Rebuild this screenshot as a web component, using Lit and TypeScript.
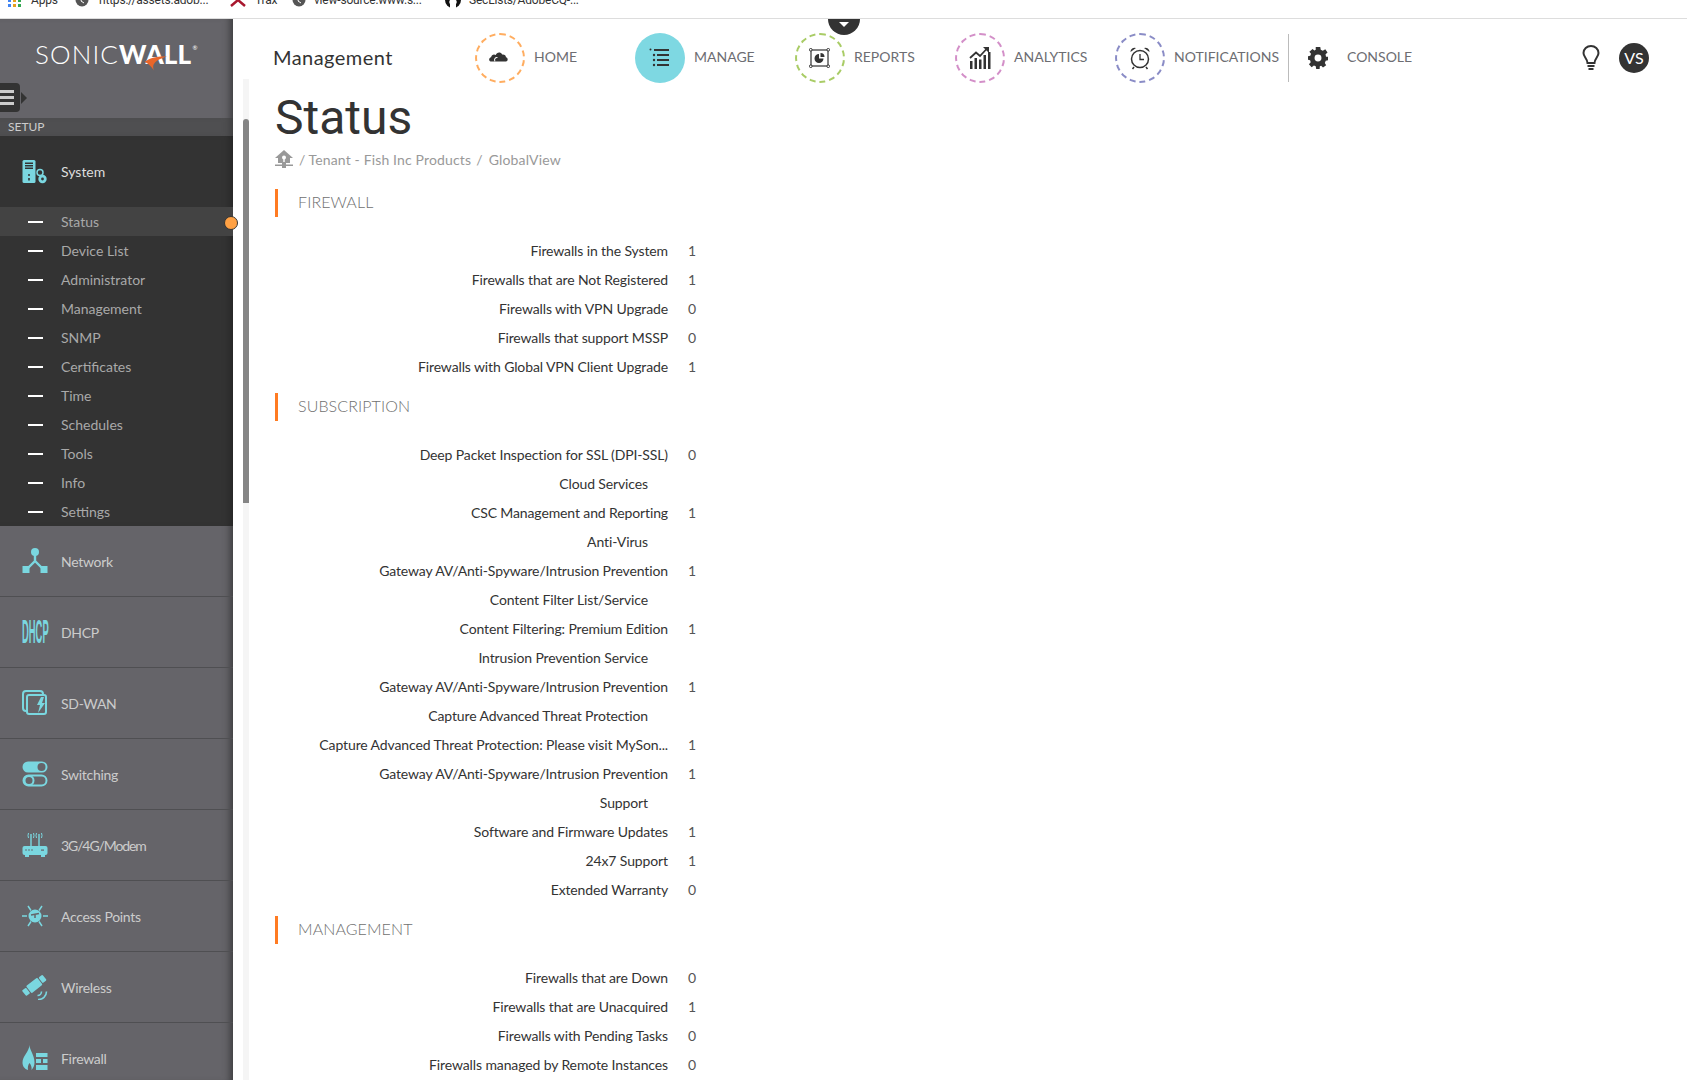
import { LitElement, html, css, svg } from "lit";
import { customElement } from "lit/decorators.js";

const ic = (body: unknown, w = 26, h = 26, vb = "0 0 26 26") =>
  html`<svg width=${w} height=${h} viewBox=${vb}>${body}</svg>`;

const sideIcons: Record<string, unknown> = {
  system: ic(svg`<rect x="0.5" y="1" width="13" height="23" rx="1.5" fill="#7ad7e0"/><rect x="3" y="3.5" width="8" height="1.5" fill="#333"/><rect x="3" y="6" width="8" height="1.5" fill="#333"/><rect x="3" y="8.5" width="8" height="1.5" fill="#333"/><circle cx="7" cy="16" r="1" fill="#333"/><rect x="6.2" y="19" width="1.6" height="2.5" fill="#333"/><circle cx="18" cy="13.5" r="3" fill="none" stroke="#7ad7e0" stroke-width="1.5"/><circle cx="20.5" cy="20" r="4.2" fill="#7ad7e0"/><circle cx="20.5" cy="20" r="1.4" fill="#333"/>`),
  network: ic(svg`<circle cx="13" cy="4" r="4" fill="#7ad7e0"/><path d="M13 6 V13 L5 21 M13 13 L21 21" fill="none" stroke="#7ad7e0" stroke-width="2.4"/><rect x="0.5" y="18" width="7" height="7" fill="#7ad7e0"/><rect x="18.5" y="18" width="7" height="7" fill="#7ad7e0"/>`),
  sdwan: ic(svg`<rect x="1" y="1" width="20" height="20" rx="3" fill="none" stroke="#7ad7e0" stroke-width="2"/><rect x="5" y="5" width="19" height="19" rx="2" fill="#656469" stroke="#7ad7e0" stroke-width="2"/><path d="M19 7 L15 15 H18 L16 23 L23 13 H20 L22 7 Z" fill="#7ad7e0"/>`),
  switching: ic(svg`<rect x="0.5" y="0.5" width="25" height="11" rx="5.5" fill="#7ad7e0"/><circle cx="19.5" cy="6" r="4" fill="#656469"/><rect x="1.5" y="14.5" width="23" height="10" rx="5" fill="none" stroke="#7ad7e0" stroke-width="2"/><circle cx="7" cy="19.5" r="4.5" fill="none" stroke="#7ad7e0" stroke-width="2"/>`),
  modem: ic(svg`<path d="M9 2 V15 M17 2 V15" stroke="#7ad7e0" stroke-width="1.4"/><path d="M6.5 1 Q5.5 3.5 6.5 6 M11.500 1 Q12.500 3.500 11.500 6 M14.500 1 Q13.500 3.500 14.500 6 M19.500 1 Q20.500 3.500 19.500 6" fill="none" stroke="#7ad7e0"/><path d="M2.500 14 H23.500 Q25.500 14 25.500 16 V21 Q25.500 23 23.500 23 H2.500 Q0.500 23 0.500 21 V16 Q0.500 14 2.500 14 Z" fill="#7ad7e0"/><rect x="3" y="23" width="4" height="2" fill="#7ad7e0"/><rect x="19" y="23" width="4" height="2" fill="#7ad7e0"/><circle cx="4" cy="18" r="0.8" fill="#656469"/><circle cx="7" cy="18" r="0.8" fill="#656469"/><circle cx="10" cy="18" r="0.8" fill="#656469"/><rect x="19" y="17.500" width="3" height="1.200" fill="#656469"/>`),
  ap: ic(svg`<circle cx="13" cy="13" r="6.5" fill="#7ad7e0"/><path d="M9 12 L17 10.500" fill="none" stroke="#656469" stroke-width="1.500"/><path d="M13 12 V15" fill="none" stroke="#656469" stroke-width="1.500"/><path d="M0 13 H5 M21 13 H26 M6 3 L9 7.500 M20 3 L17 7.500 M6 23 L9 18.500 M20 23 L17 18.500" stroke="#7ad7e0" stroke-width="1.500"/>`),
  wireless: ic(svg`<g fill="#7ad7e0" transform="rotate(-38 12 11)"><rect x="5" y="7" width="14" height="9" rx="1"/><rect x="-1" y="8" width="5" height="7" rx="1"/><rect x="20" y="8" width="5" height="7" rx="1"/></g><path d="M15.500 21.500 A4 4 0 0 0 19.500 17.500 M16 25.500 A8 8 0 0 0 24.500 17.500" fill="none" stroke="#7ad7e0" stroke-width="1.600"/>`),
  firewall: ic(svg`<path d="M7.500 0 C7.500 5 12.500 10 12.500 17.500 C12.500 20 11.500 23 9.500 25 C10 22 9 20 7.500 18 C6 20 5.500 22 6 25 C2.500 24 0.500 21 0.500 17.500 C0.500 11 7 7 7.500 0 Z" fill="#7ad7e0"/><path d="M14 8 H25.500 V12 H14 Z M14 14 H19 V18 H14 Z M21 14 H25.500 V18 H21 Z M14 20 H25.500 V25 H14 Z" fill="#7ad7e0"/>`),
};

const navIcons = {
  cloud: ic(svg`<path d="M2 17 C-0.500 17 -0.500 12.500 2.500 12 C3 9 6 8 8 9.500 C9 6 14 5.500 15.500 9 C18 8.500 20 10 20 12 C22.500 12 23 17 20 17 Z" fill="#333"/><path d="M7 17 C5.500 14 8 12 10 12.500" fill="none" stroke="#fff" stroke-width="1.200"/>`, 22, 22),
  list: ic(svg`<circle cx="1.500" cy="1.500" r="1" fill="#333"/><rect x="5" y="1" width="15" height="2" fill="#333"/><circle cx="5" cy="7" r="1.200" fill="#333"/><rect x="8" y="6" width="12" height="2" fill="#333"/><circle cx="5" cy="12" r="1.200" fill="#333"/><rect x="8" y="11" width="12" height="2" fill="#333"/><circle cx="5" cy="17" r="1.200" fill="#333"/><rect x="8" y="16" width="12" height="2" fill="#333"/>`, 22, 20, "0 0 22 20"),
  report: ic(svg`<rect x="2" y="2" width="17" height="16" fill="none" stroke="#333" stroke-width="1.200"/><g fill="#fff" stroke="#333"><rect x="0.500" y="0.500" width="2.500" height="2.500" rx="1"/><rect x="18" y="0.500" width="2.500" height="2.500" rx="1"/><rect x="0.500" y="17" width="2.500" height="2.500" rx="1"/><rect x="18" y="17" width="2.500" height="2.500" rx="1"/></g><path d="M10 6 A4.500 4.500 0 1 0 14.500 10.500 H10 Z" fill="#333"/><path d="M11.500 5 A4 4 0 0 1 15.500 9 H11.500 Z" fill="#333"/>`, 22, 20, "0 0 22 20"),
  chart: ic(svg`<rect x="1" y="15" width="2.500" height="8" fill="#333"/><rect x="5.500" y="12" width="2.500" height="11" fill="#333"/><rect x="10" y="13.500" width="2.500" height="9.500" fill="#333"/><rect x="14.500" y="9" width="2.500" height="14" fill="#333"/><rect x="19" y="6" width="2.500" height="17" fill="#333"/><path d="M1 12 L7 6.500 L11 10 L18 2.500" fill="none" stroke="#333" stroke-width="1.800"/><path d="M14 1 H20 V7 Z" fill="#333"/>`, 22, 24, "0 0 22 24"),
  clock: ic(svg`<circle cx="11" cy="13" r="8.500" fill="none" stroke="#333" stroke-width="1.500"/><path d="M11 8 V13.500 H15" fill="none" stroke="#333" stroke-width="1.300"/><path d="M1.500 6 A4 4 0 0 1 7 2 Z M20.500 6 A4 4 0 0 0 15 2 Z" fill="#333"/><path d="M5 21 L3.500 23 M17 21 L18.500 23" stroke="#333" stroke-width="1.500"/>`, 22, 24, "0 0 22 24"),
  gear: ic(svg`<path fill-rule="evenodd" fill="#333" d="M8.500 0 H13.500 L14 3 L16.300 4 L19 2.300 L21.500 6 L19.300 8 L19.800 10.500 H22 V14.500 L19.500 15 L18.500 17.500 L20 20 L16.500 22.500 L14.500 20.500 L13 21 L12.800 24 H9 L8.500 21 L6.500 20.300 L4 22.300 L1 19 L3 16.800 L2.300 14.500 L0 14 V10 L2.500 9.500 L3.300 7.300 L1.500 5 L5 2 L7 3.800 L8.500 3 Z M11 8.200 A3.800 3.800 0 1 0 11 15.800 A3.800 3.800 0 1 0 11 8.200 Z"/>`, 20, 22, "0 0 22 24"),
};

const sub = ["Status", "Device List", "Administrator", "Management", "SNMP", "Certificates", "Time", "Schedules", "Tools", "Info", "Settings"];
const groups: [string, string][] = [
  ["network", "Network"], ["dhcp", "DHCP"], ["sdwan", "SD-WAN"], ["switching", "Switching"],
  ["modem", "3G/4G/Modem"], ["ap", "Access Points"], ["wireless", "Wireless"], ["firewall", "Firewall"],
];

type Row = [string, string?];
const sections: [string, Row[]][] = [
  ["FIREWALL", [["Firewalls in the System", "1"], ["Firewalls that are Not Registered", "1"], ["Firewalls with VPN Upgrade", "0"], ["Firewalls that support MSSP", "0"], ["Firewalls with Global VPN Client Upgrade", "1"]]],
  ["SUBSCRIPTION", [["Deep Packet Inspection for SSL (DPI-SSL)", "0"], ["Cloud Services"], ["CSC Management and Reporting", "1"], ["Anti-Virus"], ["Gateway AV/Anti-Spyware/Intrusion Prevention", "1"], ["Content Filter List/Service"], ["Content Filtering: Premium Edition", "1"], ["Intrusion Prevention Service"], ["Gateway AV/Anti-Spyware/Intrusion Prevention", "1"], ["Capture Advanced Threat Protection"], ["Capture Advanced Threat Protection: Please visit MySon...", "1"], ["Gateway AV/Anti-Spyware/Intrusion Prevention", "1"], ["Support"], ["Software and Firmware Updates", "1"], ["24x7 Support", "1"], ["Extended Warranty", "0"]]],
  ["MANAGEMENT", [["Firewalls that are Down", "0"], ["Firewalls that are Unacquired", "1"], ["Firewalls with Pending Tasks", "0"], ["Firewalls managed by Remote Instances", "0"]]],
];

const nav = [
  ["HOME", "home", navIcons.cloud], ["MANAGE", "manage", navIcons.list], ["REPORTS", "reports", navIcons.report],
  ["ANALYTICS", "analytics", navIcons.chart], ["NOTIFICATIONS", "notif", navIcons.clock],
] as [string, string, unknown][];

const globe = html`<svg class="bm-ic" width="14" height="14" viewBox="0 0 14 14"><circle cx="7" cy="7" r="6.500" fill="#555"/><path d="M3 3 L7 5 L6 8 L9 10" stroke="#fff" fill="none"/></svg>`;

@customElement("app-root")
export class AppRoot extends LitElement {
  static styles = css`
    :host { display: block; width: 1687px; height: 1080px; overflow: hidden; background: #fff; font-family: "Lato", "Liberation Sans", sans-serif; color: #333; }
    .bookmarks { height: 18px; border-bottom: 1px solid #ddd; overflow: hidden; }
    .bm-row { display: flex; align-items: center; height: 16px; margin-top: -8px; font: 12px "Roboto", sans-serif; letter-spacing: -0.2px; color: #333; white-space: nowrap; }
    .bm-ic { flex: none; }
    .apps { margin-left: 8px; width: 13px; height: 13px; display: grid; grid-template-columns: repeat(3, 3px); gap: 2px; flex: none; }
    .apps i { background: #e8a020; } .apps i:nth-child(3n+1) { background: #4285f4; } .apps i:nth-child(3n) { background: #34a853; }
    .bm1 { margin-left: 10px; width: 44px; }
    .bm2 { margin-left: 10px; width: 131px; }
    .bm3 { margin-left: 9px; width: 37px; }
    .bm4 { margin-left: 8px; width: 131px; }
    .bm5 { margin-left: 8px; }
    .body { display: flex; height: 1061px; }
    .side { width: 233px; flex: none; background: #656469; position: relative; box-shadow: inset -8px 0 7px -5px #3d3d3f; z-index: 1; }
    .logo-wrap { height: 64px; box-sizing: border-box; display: flex; align-items: center; padding: 5px 0 0 35px; color: #fff; position: relative; font-size: 26px; letter-spacing: 1.1px; font-weight: 300; white-space: nowrap; }
    .logo-wrap b { font-weight: 900; letter-spacing: 0.2px; }
    .logo-wrap sup { font-size: 6px; font-weight: 400; margin: -12px 0 0 1px; letter-spacing: 0; }
    .swoosh { position: absolute; left: 144px; top: 37px; }
    .ham-row { height: 36px; margin-bottom: -1px; display: flex; align-items: flex-start; }
    .ham { width: 20px; height: 29px; background: #333; border-radius: 0 4px 4px 0; display: flex; flex-direction: column; justify-content: center; gap: 3px; }
    .ham i { display: block; width: 14px; height: 3px; background: #ccc; }
    .tri { width: 0; height: 0; margin: 9px 0 0 1px; border-left: 6px solid #333; border-top: 6px solid transparent; border-bottom: 6px solid transparent; }
    .setup { height: 18px; line-height: 18px; background: #4f4f51; color: #ccc; font-size: 12px; padding-left: 8px; box-shadow: inset -8px 0 7px -5px #3d3d3f; }
    .sys { background: #333; box-shadow: inset -8px 0 7px -5px #262626; }
    .ghead { height: 70px; display: flex; align-items: center; padding-left: 22px; gap: 13px; font-size: 14px; color: #ccc; letter-spacing: -0.3px; box-sizing: border-box; }
    .ghead.sel { height: 71px; color: #ddd; letter-spacing: 0; }
    .modem { letter-spacing: -1.1px; }
    .g { border-bottom: 1px solid #4f4f52; }
    .ghead svg { flex: none; width: 26px; }
    .dhcp-box { flex: none; width: 26px; overflow: visible; }
    .dhcp { display: block; font: 700 33px/26px "Liberation Sans", sans-serif; color: #7ad7e0; transform: scaleX(0.285); transform-origin: left; letter-spacing: 0; white-space: nowrap; }
    .sub { height: 29px; display: flex; align-items: center; padding-left: 28px; gap: 18px; font-size: 14px; color: #a9a9a9; }
    .sub.on { background: #434343; }
    .sub i { display: block; width: 15px; height: 2px; background: #fff; }
    .dot { position: absolute; left: 224px; top: 197px; width: 12px; height: 12px; border-radius: 50%; background: #ffa144; border: 1.500px solid #333; }
    .track { width: 6px; flex: none; margin: 60px 0 0 10px; background: #f5f5f5; }
    .thumb { height: 384px; margin-top: 40px; background: #858585; border-radius: 3px 3px 0 0; }
    .main { flex: 1; min-width: 0; }
    .top { height: 77px; display: flex; align-items: center; position: relative; }
    .brand { width: 226px; padding: 0 0 2px 24px; box-sizing: border-box; font-size: 20px; color: #333; flex: none; letter-spacing: 0.45px; }
    .nav { width: 160px; display: flex; align-items: center; gap: 9px; flex: none; font-size: 14px; color: #6d6d72; }
    .nav span, .console span { margin-bottom: 2px; }
    .nav.last { width: 173px; }
    .circ { width: 50px; height: 50px; border-radius: 50%; display: flex; align-items: center; justify-content: center; box-sizing: border-box; border: 2.500px dashed; flex: none; }
    .home { border-color: #ffad60; } .manage { border: none; background: #7ed8e2; } .reports { border-color: #a9cc66; } .analytics { border-color: #d38fc8; } .notif { border-color: #8a8cc6; }
    .divider { width: 1px; height: 48px; background: #bbb; flex: none; margin-right: 19px; }
    .console { display: flex; align-items: center; gap: 19px; font-size: 14px; color: #6d6d72; }
    .right { margin-left: auto; display: flex; align-items: center; gap: 19px; padding-right: 38px; }
    .vs { width: 30px; height: 30px; border-radius: 50%; background: #333; color: #fff; font-size: 16px; display: flex; align-items: center; justify-content: center; }
    .pull { position: absolute; left: 579px; top: 0; width: 32px; height: 16px; background: #333; border-radius: 0 0 16px 16px; display: flex; justify-content: center; padding-top: 3px; box-sizing: border-box; }
    .pull i { width: 0; height: 0; border-top: 5px solid #fff; border-left: 5px solid transparent; border-right: 5px solid transparent; }
    .content { padding-left: 26px; }
    h1 { margin: 0; font: 400 48px/44px "Roboto", sans-serif; color: #333; }
    .crumb { display: flex; align-items: center; gap: 5px; height: 20px; margin-top: 9px; font-size: 14px; color: #999; letter-spacing: 0.15px; }
    .crumb svg { margin-right: 1px; }
    .sl1 { margin-right: -2px; }
    .sl2 { margin-right: 1px; }
    .section { margin-top: 12px; }
    .crumb + .section { margin-top: 20px; }
    .sec-h { height: 28px; border-left: 3px solid #ff7b22; padding-left: 20px; font-size: 16px; font-weight: 300; line-height: 26px; color: #707070; letter-spacing: 0.1px; margin-bottom: 19px; }
    .row { height: 29px; display: flex; align-items: center; font-size: 14px; color: #333; }
    .lbl { width: 393px; text-align: right; box-sizing: border-box; white-space: nowrap; letter-spacing: -0.12px; }
    .lbl.h { padding-right: 20px; }
    .val { margin-left: 20px; color: #555; }
  `;

  render() {
    return html`
      <div class="bookmarks"><div class="bm-row">
        <span class="apps">${Array.from({ length: 9 }, () => html`<i></i>`)}</span>
        <span class="bm1">Apps</span>${globe}<span class="bm2">https://assets.adob...</span>
        <svg class="bm-ic" width="16" height="14" viewBox="0 0 16 14"><path d="M1 1 L15 13 M15 1 L1 13" stroke="#a8172e" stroke-width="2.500"/></svg>
        <span class="bm3">Trax</span>${globe}<span class="bm4">view-source:www.s...</span>
        <svg class="bm-ic" width="16" height="16" viewBox="0 0 16 16"><circle cx="8" cy="8" r="8" fill="#111"/><path d="M5 16 V12 C4 11 4 9 5 8 H11 C12 9 12 11 11 12 V16" fill="#fff"/></svg>
        <span class="bm5">SecLists/AdobeCQ-...</span>
      </div></div>
      <div class="body">
        <aside class="side">
          <div class="logo-wrap">SONIC<b>WALL</b><sup>®</sup>
            <svg class="swoosh" width="24" height="16" viewBox="0 0 24 16"><path d="M23 0.500 C15 0 6 1 0.500 6 C4 7 8 11 10.500 15.500 C8 10 8 5 23 0.500 Z" fill="#e8662a"/></svg>
          </div>
          <div class="ham-row"><div class="ham"><i></i><i></i><i></i></div><div class="tri"></div></div>
          <div class="setup">SETUP</div>
          <div class="sys">
            <div class="ghead sel">${sideIcons.system}<span>System</span></div>
            <div>${sub.map((s, i) => html`<div class="sub ${i === 0 ? "on" : ""}"><i></i><span>${s}</span></div>`)}</div>
          </div>
          ${groups.map(([k, l]) => html`<div class="g"><div class="ghead">${k === "dhcp" ? html`<span class="dhcp-box"><span class="dhcp">DHCP</span></span>` : sideIcons[k]}<span class=${k === "modem" ? "modem" : ""}>${l}</span></div></div>`)}
          <div class="dot"></div>
        </aside>
        <div class="track"><div class="thumb"></div></div>
        <main class="main">
          <header class="top">
            <div class="brand">Management</div>
            ${nav.map(([l, c, i], n) => html`<div class="nav ${n === 4 ? "last" : ""}"><div class="circ ${c}">${i}</div><span>${l}</span></div>`)}
            <div class="divider"></div>
            <div class="console">${navIcons.gear}<span>CONSOLE</span></div>
            <div class="right">
              <svg width="18" height="26" viewBox="0 0 18 26"><path d="M5.500 18 C5 13 1.500 12 1.500 8 A7.500 7 0 0 1 16.500 8 C16.500 12 13 13 12.500 18 Z" fill="none" stroke="#333" stroke-width="2"/><rect x="5.500" y="20" width="7" height="2" fill="#333"/><rect x="6.500" y="23" width="5" height="2" fill="#333"/></svg>
              <div class="vs">VS</div>
            </div>
            <div class="pull"><i></i></div>
          </header>
          <div class="content">
            <h1>Status</h1>
            <div class="crumb">
              <svg width="18" height="18" viewBox="0 0 18 18"><path d="M9 0 L18 8 H15 V13 H3 V8 H0 Z" fill="#999"/><circle cx="9" cy="7.500" r="2" fill="#fff"/><rect x="8.300" y="8" width="1.400" height="4" fill="#fff"/><rect x="0" y="14.500" width="18" height="1.500" fill="#999"/><rect x="7" y="13" width="4" height="5" fill="#999"/></svg>
              <span class="sl1">/</span><span>Tenant - Fish Inc Products</span><span class="sl2">/</span><span>GlobalView</span>
            </div>
            ${sections.map(([t, rows]) => html`<section class="section"><div class="sec-h">${t}</div>
              ${rows.map(([l, v]) => html`<div class="row"><span class="lbl ${v ? "" : "h"}">${l}</span>${v ? html`<span class="val">${v}</span>` : ""}</div>`)}
            </section>`)}
          </div>
        </main>
      </div>`;
  }
}
